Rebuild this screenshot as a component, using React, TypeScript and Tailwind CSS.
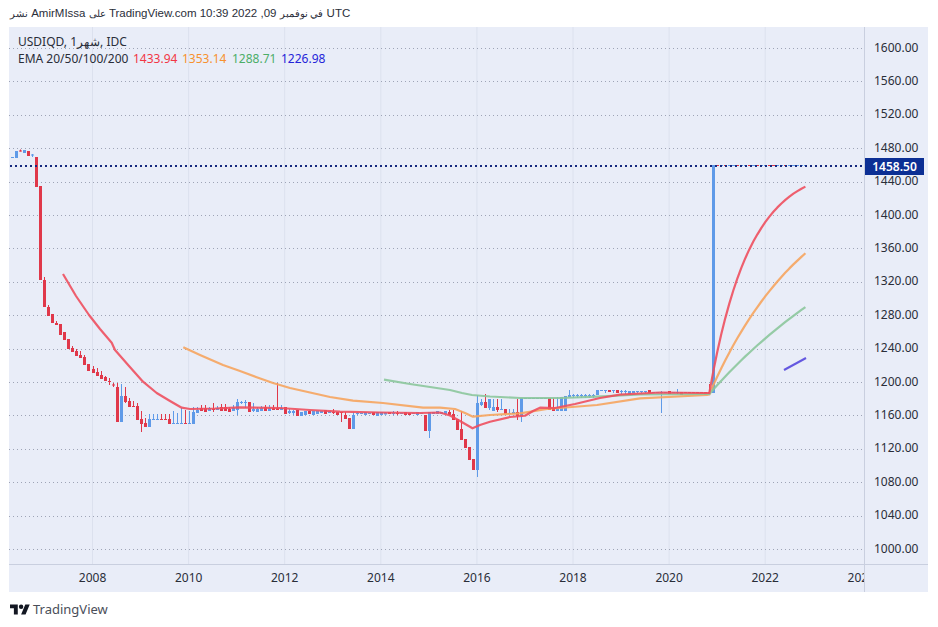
const R = "#e0384a";
const B = "#5f9ae8";

// [colour 0 red / 1 blue, body top, body bottom, wick top, wick bottom], one candle per month
const candles: number[][] = [
  [1,157,158],[1,151,158],[0,150.5,151.5,149.5],[1,150,153],[0,151,156],[1,154.5,155.5,154,157],[0,157,187],[0,186,280],
  [0,280,307,277],[0,307,316,305],[0,314,323],[0,323,325,321],[0,324,335],[0,332,340],[0,339,349],[0,348,352,346],
  [0,351,356,349],[0,355,358,351],[0,357,365,355],[0,364,371],[0,369,373,366],[0,372,376,368],[0,375,379,371],[0,377,381,376],
  [0,381,382,378,385],[0,384.5,385.5,383,387],[0,387,422,383],[1,396,422,384],[0,396,402,387,403],[0,401,407,398],[0,406,407,401],[0,406,420,403],
  [0,419,424,411,432],[0,423,427,418],[1,419,427,414],[1,419,420,414],[1,419,420,414],[0,419,420,414],[0,419,420,414],[0,419,424,414],
  [1,423,424,411],[1,423,424,413],[1,423,424,408],[0,423,424,410],[1,423,424,411],[1,412,424,407],[1,410,413,407],[0,408,411,405],
  [0,408,412,405],[1,408,411,407],[0,409,410,403,412],[1,408,410,406],[0,407,411,404],[0,407,411,404],[0,409,412,407],[1,408,411,405],
  [1,402,410,399,415],[1,402,403,401,404],[1,402,403,400,408],[0,402,412],[1,409,411,403,412],[1,409,412,407],[1,408,411,406],[0,407,411,405],
  [1,408,411,405],[0,408,410,405],[0,408,410,383],[1,408,410,405],[0,407,414],[1,411,413,409,414],[1,411,413,410,415],[0,410,416],
  [1,412,416],[1,411,415],[0,411,414],[1,411,415],[1,411,414],[1,411,413],[0,410,414],[1,411,413],
  [0,412,413,409,414],[0,412,415],[0,412,413,412,422],[0,415,419,412],[0,418,429],[1,415,429,412],[1,413,414,412,415],[1,413,414],
  [1,412,415],[1,413,414],[0,412,415],[1,412,416],[1,412,415],[1,412.5,414.5],[0,412,414],[1,413,414,411,415],
  [0,413,414,411,415],[1,413,414],[0,412,415],[0,413,415],[1,413,414],[1,412,415],[1,413,414],[0,415,431],
  [1,412,431,412,438],[1,412,414],[1,411,414],[1,412,414],[1,411,414],[0,412,415,410],[0,414,420,410],[0,419,430],
  [0,429,440,411],[0,439,448],[0,447,460],[0,459,470],[1,403,470,395,477],[1,402,405,399,406],[0,402,408,394],[1,399,408,399,410],
  [1,407,411,399],[0,407,410,399,412],[1,409,410,399],[0,409,414],[1,413,414,409],[1,412,414,409],[0,412,416,399,420],[1,398,416,398,422],
  [1,398,399],[1,398,399],[1,398,399],[1,398,399],[1,398,399],[1,398,399],[0,398,410],[0,408,411,398],
  [1,408,411,397],[1,397,411],[1,396,411],[1,395,397,390,397],[1,395,396,394,398],[1,395,396,394,398],[1,395,396,394,398],[1,395,396,394,398],
  [1,395,396,394,398],[1,395,396,394,398],[1,390,395],[1,390,391],[1,390,391,390,393],[0,390,392],[1,390,391,390,393],[0,390,393],
  [1,391,392,390,394],[1,391,392,390,394],[1,391,394],[1,391,393],[1,391,392,391,393],[1,391,392,391,393],[1,391,392,391,393],[0,390,393],
  [1,392,393],[1,392,393],[1,392,393,391,413],[1,392,393],[0,391,394],[1,392,393],[1,392,393,389,394],[0,392,395],
  [0,392,393],[0,392,393],[0,392,393],[0,392,393],[0,392,393],[0,392,395],[0,392,394,384,394],[1,165,393],
  [0,165,166],[1,165,166],[0,165,166],[1,165,166],[1,165,166],[0,165,166],[1,165,166],[1,165,166],
  [0,165,166],[1,165,166],[0,165,166],[1,165,166],[1,165,166],[0,165,166],[0,165,166],[1,165,166],
  [1,165,166],[0,165,166],[1,165,166],[1,165,166],[1,165,166],[1,165,166],[1,165,166],
];

const prices = ["1600.00","1560.00","1520.00","1480.00","1440.00","1400.00","1360.00","1320.00","1280.00","1240.00","1200.00","1160.00","1120.00","1080.00","1040.00","1000.00"];
const gridYears = [92.5, 188.6, 284.7, 380.8, 476.9, 573, 669.1, 765.2];
const years = ["2008","2010","2012","2014","2016","2018","2020","2022","2024"];

// After the jump the averages close in on the last price month by month.
function rise(start: number, period: number) {
  const k = 2 / (period + 1);
  const pts: string[] = [];
  let y = start;
  for (let m = 0; m <= 23; m++) {
    y += (166 - y) * k;
    pts.push(`${(713.3 + m * 4.005).toFixed(1)},${y.toFixed(1)}`);
  }
  return pts.join(" ");
}

const redEma = `63,274 76,296 89,315 100,329 111.7,342.7 115,350 129,366 143,381.7 156.7,393 170,401 181.7,407.7 190,409 215,408.5 240,407.3 280,408 310,410 340,411.7 380,412.5 420,413 440,412.5 450,415.5 460,421 472.5,428.3 480,425 490,421.7 510,417 525,415.7 533,411 540,407.7 555,408 575,404 600,398 620,394.7 660,392.5 705,393 709.3,393 ${rise(393, 20)}`;
const orangeEma = `183.3,347.3 200,355 223,365 240,371 256,377 273,383 290,388 310,392.5 330,397 353,400.7 383,403 423,407.7 440,407.7 455,409 465,413 473,416.7 490,415 520,413.3 547,409 597,405 640,398.3 707,395 709.3,394.5 ${rise(394, 50)}`;
const greenEma = `384,379.7 410,384 430,387 450,390 462,393 472,395 490,396.5 520,398 560,398 597,396.7 640,394.5 707,394 709.3,394 ${rise(394, 100)}`;

const sans = "font-['Noto_Sans','Liberation_Sans',sans-serif]";

export default function App() {
  return (
    <div className={`h-[627px] w-[938px] overflow-hidden bg-white text-[#2a2e39] ${sans}`}>
      <div className="flex h-[27px] items-center pl-[10px] font-['Liberation_Sans','Noto_Sans',sans-serif] text-[11.5px] leading-none">
        <span>
          <span className="text-[10px]">نشر</span> AmirMIssa <span className="text-[10px]">على</span> TradingView.com <span className="text-[10px]">في نوفمبر</span> 09, 2022 10:39 UTC
        </span>
      </div>

      <div className="ml-[9px] flex h-[565px] w-[919px] flex-col bg-[#e9edf8]">
        <div className="flex h-[537px]">
          <div className="relative h-[537px] w-[855px]">
            <svg width="855" height="537" viewBox="9 27 855 537" className="block">
              {gridYears.map((x) => (
                <line key={x} x1={x} x2={x} y1={27} y2={564} stroke="#dce1ee" strokeWidth="1" />
              ))}
              {prices.map((_, i) => {
                const y = Math.round(48 + i * 33.4) + 0.5;
                return <line key={i} x1={9} x2={864} y1={y} y2={y} stroke="#9ea4b6" strokeWidth="1" strokeDasharray="1 3" />;
              })}
              {candles.map((c, i) => {
                const x = Math.round(12.4 + 4.005 * i);
                const color = c[0] ? B : R;
                return (
                  <g key={i} fill={color}>
                    <rect x={x} y={c[3] ?? c[1]} width="1" height={(c[4] ?? c[2]) - (c[3] ?? c[1])} />
                    <rect x={x - 1} y={c[1]} width="3" height={c[2] - c[1]} />
                  </g>
                );
              })}
              <polyline points={orangeEma} fill="none" stroke="#f6a45e" strokeOpacity="0.9" strokeWidth="2.2" strokeLinejoin="round" />
              <polyline points={greenEma} fill="none" stroke="#8cc79c" strokeOpacity="0.9" strokeWidth="2.2" strokeLinejoin="round" />
              <polyline points={redEma} fill="none" stroke="#ee4f5e" strokeOpacity="0.9" strokeWidth="2.2" strokeLinejoin="round" />
              <polyline points="784,370 806,358" fill="none" stroke="#6458e0" strokeWidth="2" />
              <line x1={10} x2={864} y1={166} y2={166} stroke="#14287f" strokeWidth="2" strokeDasharray="2 3" />
            </svg>
            <div className="absolute left-[9px] top-[6px] text-[12px] leading-[17px]">
              <div>USDIQD, 1شهر, IDC</div>
              <div className="flex">
                <span className="w-[115px]">EMA 20/50/100/200</span>
                <span className="w-[49px] text-[#f23645]">1433.94</span>
                <span className="w-[50px] text-[#f7912f]">1353.14</span>
                <span className="w-[49px] text-[#4cae68]">1288.71</span>
                <span className="text-[#2424d8]">1226.98</span>
              </div>
            </div>
          </div>

          <div className="relative w-[64px] border-l border-[#c9cfdf] pt-[4px] text-[12px] leading-none">
            {prices.map((p) => (
              <div key={p} className="flex h-[33.4px] items-center pl-[9px]">{p}</div>
            ))}
            <div className="absolute left-0 top-[131px] flex h-[17px] w-[59px] items-center justify-center bg-[#0c2f94] text-[12px] font-semibold text-white">
              1458.50
            </div>
          </div>
        </div>

        <div className="flex h-[28px] border-t border-[#c9cfdf]">
          <div className="flex w-[855px] items-center overflow-hidden pb-[1px] pl-[35.5px] text-[12px] leading-none">
            {years.map((y) => (
              <div key={y} className="w-[96.1px] shrink-0 text-center">{y}</div>
            ))}
          </div>
          <div className="w-[64px] border-l border-[#c9cfdf]" />
        </div>
      </div>

      <div className="flex h-[35px] items-center pl-[10px]">
        <svg width="20" height="16" viewBox="0 0 36 28" className="mr-[3px] block" fill="#131722">
          <path d="M14 22H7V11H0V4h14v18zM28 22h-8l7.5-18h8L28 22z" />
          <circle cx="20" cy="8" r="4" />
        </svg>
        <span className="text-[13px] leading-none text-[#4a4e59]">TradingView</span>
      </div>
    </div>
  );
}
